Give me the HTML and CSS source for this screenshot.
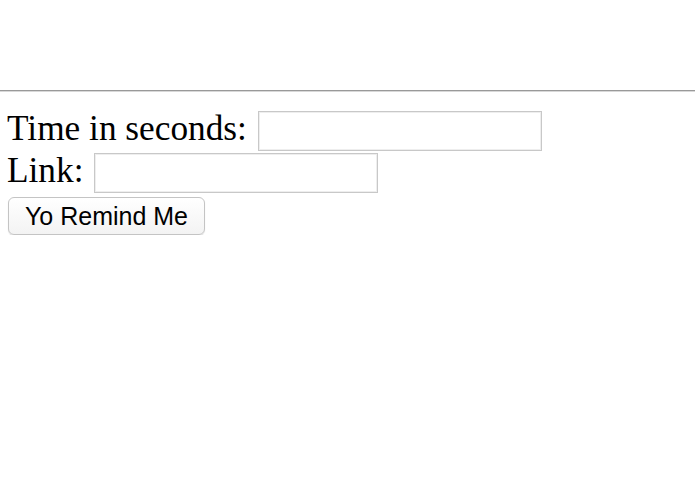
FILE: index.html
```html
<!DOCTYPE html>
<html lang="en">

<head>
    <meta charset="UTF-8">
    <meta name="viewport" content="width=device-width, initial-scale=1.0">
    <title>Yo Remind Me</title>
    <link rel="stylesheet" href="styles.css">
</head>

<body>
    <div class="top"></div>
    <form class="remind">
        <div class="row">
            <label for="time">Time in seconds:</label>
            <input type="text" id="time" class="field">
        </div>
        <div class="row">
            <label for="link">Link:</label>
            <input type="text" id="link" class="field">
        </div>
        <button type="button" class="go">Yo Remind Me</button>
    </form>
</body>

</html>
```

FILE: styles.css
```css
html,
body {
    margin: 0;
    background: #fff;
}

.top {
    height: 90px;
    border-bottom: 1px solid #999;
    box-shadow: 0 1px 0 #d8d8d8;
}

.remind {
    padding: 19px 0 0 7px;
    font-family: "Liberation Serif", "Times New Roman", serif;
    font-size: 35.3px;
    color: #000;
}

.row {
    display: flex;
    align-items: center;
    height: 42px;
}

.row label {
    line-height: 42px;
    margin-bottom: 4px;
}

.field {
    width: 284px;
    height: 40px;
    box-sizing: border-box;
    margin: 0 0 0 11px;
    border: 1px solid #c8c8c8;
    box-shadow: inset 0 0 0 1px #eee;
    padding: 0 6px;
    background: #fff;
    outline: none;
}

.go {
    display: block;
    margin: 3px 0 0 1px;
    width: 197px;
    height: 38px;
    box-sizing: border-box;
    padding: 0;
    border: 1px solid #c4c4c4;
    border-radius: 6px;
    background: linear-gradient(#fff, #f3f3f3);
    box-shadow: 0 1px 1px rgba(0, 0, 0, .12);
    font-family: "Liberation Sans", Arial, sans-serif;
    font-size: 25px;
    color: #000;
    cursor: pointer;
}
```
